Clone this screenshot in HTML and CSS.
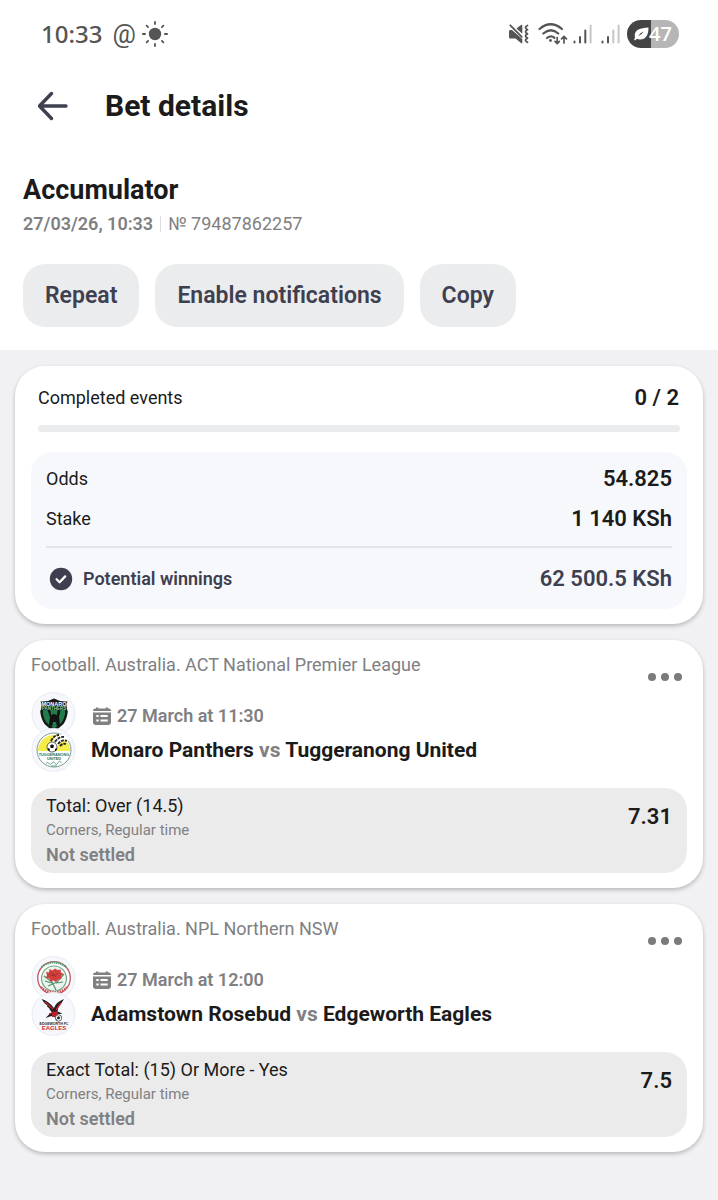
FILE: index.html
```html
<!DOCTYPE html>
<html lang="en">
<head>
<meta charset="utf-8">
<meta name="viewport" content="width=device-width, initial-scale=1">
<title>Bet details</title>
<link rel="stylesheet" href="styles.css">
</head>
<body>
<svg class="defs" width="0" height="0" aria-hidden="true">
  <symbol id="calendar" viewBox="0 0 18 18">
    <path d="M3 1.6V0.5h2.4v1.1h7.2V0.5H15v1.1h.8A2.2 2.2 0 0 1 18 3.8V4H0v-.2a2.2 2.2 0 0 1 2.2-2.2z" fill="#808082"/>
    <path fill-rule="evenodd" d="M0 5.4h18v10.2a2.4 2.4 0 0 1-2.4 2.4H2.4A2.4 2.4 0 0 1 0 15.600zM3.300 8v2h2.400V8zM7.500 8v2h7.200V8zM3.300 12.500v2h2.400v-2zM7.500 12.500v2h7.200v-2z" fill="#808082"/>
  </symbol>
  <symbol id="dots" viewBox="0 0 36 10">
    <circle cx="5" cy="5" r="4" fill="#7b7b7d"/><circle cx="18" cy="5" r="4" fill="#7b7b7d"/><circle cx="31" cy="5" r="4" fill="#7b7b7d"/>
  </symbol>
</svg>
<div class="top">
  <div class="status">
    <div class="status-left">
      <span class="clock">10:33</span>
      <span class="at">@</span>
      <svg class="sun" width="26" height="26" viewBox="0 0 26 26" aria-hidden="true">
        <circle cx="13" cy="13" r="6.200" fill="#555"/>
        <path d="M13 .9v2.200M13 22.900v2.200M.9 13h2.200M22.900 13h2.200M4.600 4.600l1.500 1.500M19.900 19.900l1.500 1.500M4.600 21.400l1.500-1.500M19.900 6.100l1.500-1.500" stroke="#555" stroke-width="1.800" stroke-linecap="round"/>
      </svg>
    </div>
    <div class="status-right">
      <svg width="22" height="22" viewBox="0 0 22 22" aria-hidden="true">
        <path d="M1 8.300q0-1.200 1.200-1.200H4l10.300 8.800v3.600q0 1.500-1.300.5L7.500 15.500H2.200Q1 15.500 1 14.300zM8.500 5.600l4.500-3.500q1.300-.9 1.300.6v8z" fill="#555"/>
        <path d="M2.300 2.300l11.500 11.500" stroke="#555" stroke-width="1.800" stroke-linecap="round"/>
        <path d="M19.500 2.500q-4 2 0 4.200-4 2 0 4.200-4 2 0 4.200-4 2 0 4.200" fill="none" stroke="#555" stroke-width="1.800" stroke-linecap="round" stroke-linejoin="round"/>
      </svg>
      <svg class="wifi" width="30" height="24" viewBox="0 0 30 24" aria-hidden="true">
        <g fill="none" stroke="#555" stroke-width="2.200" stroke-linecap="round">
          <path d="M1.500 7q11-9.500 22.500 0M5.300 11.500q7.700-6.500 15 0M9 16q4-3.200 7.500-.2"/>
          <path d="M19.200 15.500v5.700M17 19.300l2.200 2.200 2.200-2.200M26 21v-6M23.500 16.800l2.500-2.300 2.500 2.300" stroke-width="1.700"/>
        </g>
        <circle cx="12.500" cy="18.500" r="1.400" fill="#555"/>
      </svg>
      <svg width="19" height="20" viewBox="0 0 19 20" aria-hidden="true">
        <g fill="none" stroke="#555" stroke-width="2" stroke-linecap="round"><path d="M1.500 17.500v1M7 13v5.500M12.300 6.500v12"/><path d="M17.600 1.500v17" stroke="#c6c6c6"/></g>
      </svg>
      <svg class="signal-last" width="19" height="20" viewBox="0 0 19 20" aria-hidden="true">
        <g fill="none" stroke="#555" stroke-width="2" stroke-linecap="round"><path d="M1.500 17.500v1M7 13v5.500"/><path d="M12.300 6.500v12M17.600 1.500v17" stroke="#c6c6c6"/></g>
      </svg>
      <div class="battery">
        <svg width="15" height="14" viewBox="0 0 15 14" aria-hidden="true"><path d="M1 10.500C-.5 3.500 5 1 14.500.5 14.500 8 12 12.500 6 12.500q-1.800 0-3-.8L1 13.500.2 12.500zM4.200 9.200Q8 7.500 9.800 4.500 6 5.500 4.200 9.200" fill="#fff" fill-rule="evenodd"/></svg>
        <span>47</span>
      </div>
    </div>
  </div>
  <header class="bar">
    <button class="back" aria-label="Back">
      <svg width="32" height="30" viewBox="0 0 32 30" aria-hidden="true"><path d="M15.500 2.500L3.500 15l12 12.500M3.500 15H30" fill="none" stroke="#3e3f4f" stroke-width="3.400" stroke-linecap="round" stroke-linejoin="round"/></svg>
    </button>
    <h1>Bet details</h1>
  </header>
  <section class="intro">
    <h2>Accumulator</h2>
    <p class="meta"><b>27/03/26, 10:33</b><span class="number">№ 79487862257</span></p>
    <div class="actions">
      <button>Repeat</button>
      <button>Enable notifications</button>
      <button>Copy</button>
    </div>
  </section>
</div>
<main class="list">
  <section class="card">
    <div class="completed"><label for="done">Completed events</label><strong>0 / 2</strong></div>
    <progress id="done" value="0" max="2"></progress>
    <dl class="totals">
      <div class="row"><dt>Odds</dt><dd>54.825</dd></div>
      <div class="row"><dt>Stake</dt><dd>1 140 KSh</dd></div>
      <div class="row win">
        <dt><svg width="24" height="24" viewBox="0 0 24 24" aria-hidden="true"><circle cx="12" cy="12" r="11.200" fill="#3e3f4f"/><path d="M7.600 12.200l3 3 5.600-5.800" fill="none" stroke="#fff" stroke-width="2.300" stroke-linecap="round" stroke-linejoin="round"/></svg>Potential winnings</dt>
        <dd>62 500.5 KSh</dd>
      </div>
    </dl>
  </section>
  <article class="card">
    <div class="league"><span>Football. Australia. ACT National Premier League</span>
      <button class="more" aria-label="More options"><svg width="36" height="10"><use href="#dots"/></svg></button></div>
    <div class="match">
      <svg class="crests" width="46" height="80" viewBox="0 0 46 80" role="img" aria-label="Team crests">
        <circle cx="22.500" cy="22" r="21.500" fill="#f6f8fc" stroke="#e9ebf2"/>
        <path d="M9.500 9.500Q17 10 23 6.500q6 3.500 13.500 3-2 4 .3 10-.8 7.500-4.300 12.500Q29 36 23 38.500 17 36 13.500 32 10 27 9.200 19.500q2.300-6 .3-10z" fill="#151817"/>
        <path d="M12 18h22v4q-.8 5-3.500 8.500-3.500 4-7.500 6-4-2-7.500-6Q12.800 27 12 22z" fill="#237b4c"/>
        <path d="M16.500 18h2.800l.8 5 2.900-1 2.900 1 .8-5h2.800l-1.500 7 1 8-3 2-1-5h-3l-1 5-3-2 1-8z" fill="#101412"/>
        <text x="23" y="13.500" text-anchor="middle" class="crest-word" fill="#fff" font-size="5.500">MONARO</text>
        <text x="23" y="17.500" text-anchor="middle" class="crest-word" fill="#8fd0ae" font-size="4.500">PANTHERS</text>
        <circle cx="22.500" cy="58" r="21.500" fill="#f6f8fc" stroke="#e9ebf2"/>
        <circle cx="23" cy="58" r="17" fill="#fff" stroke="#7f9b91"/>
        <path d="M7 59A16 16 0 0 1 39 59z" fill="#f5ed48"/>
        <path d="M20 54q3-12 12-12 4 2 6 7-8-2-13 8z" fill="#fff"/>
        <path d="M20 49q3-6 8-6M24 50q4-6 9-5M27 52q4-5 9-3M29 54q3-3 6-2" fill="none" stroke="#222" stroke-width="1.800" stroke-dasharray="3 1"/>
        <circle cx="21" cy="55" r="5" fill="#fff" stroke="#222" stroke-width=".7"/>
        <path d="M19 53.500l2-1.300 2 1.300-.7 2.500h-2.500zM16.500 56l2 .5.500 2-1.500.5zM24 57l1.800-1v2l-1.800 1.500z" fill="#111"/>
        <text x="23" y="64" text-anchor="middle" class="crest-word" fill="#27705c" font-size="3.800">TUGGERANONG</text>
        <text x="23" y="67.500" text-anchor="middle" class="crest-word" fill="#27705c" font-size="3.800">UNITED</text>
        <path d="M15 71.500q2-2 3 0t3-.5 3 .3 3-.5 3 0M20 74h6" fill="none" stroke="#5c9b87" stroke-width=".9"/>
      </svg>
      <div class="info">
        <p class="date"><svg width="18" height="18" aria-hidden="true"><use href="#calendar"/></svg>27 March at 11:30</p>
        <h3>Monaro Panthers <span>vs</span> Tuggeranong United</h3>
      </div>
    </div>
    <div class="bet">
      <div><p class="pick">Total: Over (14.5)</p><p class="market">Corners, Regular time</p><p class="state">Not settled</p></div>
      <strong>7.31</strong>
    </div>
  </article>
  <article class="card">
    <div class="league"><span>Football. Australia. NPL Northern NSW</span>
      <button class="more" aria-label="More options"><svg width="36" height="10"><use href="#dots"/></svg></button></div>
    <div class="match">
      <svg class="crests" width="46" height="80" viewBox="0 0 46 80" role="img" aria-label="Team crests">
        <circle cx="22.500" cy="22" r="21.500" fill="#f6f8fc" stroke="#e9ebf2"/>
        <circle cx="23" cy="22" r="16.300" fill="#fff" stroke="#c25b62" stroke-width="1.300"/>
        <circle cx="23" cy="22.500" r="12.500" fill="#eaf3ec" stroke="#74a58b" stroke-width="1.200"/>
        <path d="M10.500 11q12-9 25 0" fill="none" stroke="#5f9c7b" stroke-width="2.200" stroke-dasharray="1.500 .7"/>
        <path d="M13 20l8 6 4 8M33 18l-7 8-9 4M14 25l7 2M32 26l-7 1" fill="none" stroke="#559374" stroke-width="1.200"/>
        <path d="M16 19l-1-3 3 .5.500-3.500 3 1.500 2.500-2 2.500 1.500 3-.5.500 3 2.500 1.500-2.500 2 .5 3-3.500.5-2 2.500-2.500-1.500-3 1-1-3-3.500-.5z" fill="#d23f3d"/>
        <path d="M19 18q3 4 8-1M20 16l5 5" fill="none" stroke="#8e292b" stroke-width=".8"/>
        <path d="M10 31q5 5.500 13 5.500T36 31" fill="none" stroke="#ca5059" stroke-width="2.500" stroke-dasharray="1.600 .9"/>
        <circle cx="22.500" cy="58" r="21.500" fill="#f6f8fc" stroke="#e9ebf2"/>
        <path d="M10.500 43q7 2 12.500 9 2-6 10-9-2 4-4.500 6l-1 1.500-1 5 5 2-5.500 1-1.500 3-4-1.500-6 2 4.500-4.500 2-1q-2-2-3-4.500l-2-1.500.5-.7q-3.500-2.500-6-6.800z" fill="#202024"/>
        <path d="M14 46l8 7M25 54l5-7M18 58l5-2" stroke="#c5272f" stroke-width="1.300"/>
        <path d="M21 56l6-1-1 5-5 1z" fill="#b9202a"/>
        <circle cx="27.500" cy="62" r="3.200" fill="#fff" stroke="#333" stroke-width=".7"/><path d="M26.200 61.300l1.500-.8 1.200 1-.6 1.500h-1.500zM25 63l1.500 1M29.500 59.500l1 1" fill="#222" stroke="#222" stroke-width=".6"/>
        <text x="23" y="69.300" text-anchor="middle" class="crest-word" fill="#262626" font-size="3.500">EDGEWORTH FC</text>
        <text x="23" y="74.200" text-anchor="middle" class="crest-word" fill="#d22a31" font-size="6">EAGLES</text>
      </svg>
      <div class="info">
        <p class="date"><svg width="18" height="18" aria-hidden="true"><use href="#calendar"/></svg>27 March at 12:00</p>
        <h3>Adamstown Rosebud <span>vs</span> Edgeworth Eagles</h3>
      </div>
    </div>
    <div class="bet">
      <div><p class="pick">Exact Total: (15) Or More - Yes</p><p class="market">Corners, Regular time</p><p class="state">Not settled</p></div>
      <strong>7.5</strong>
    </div>
  </article>
</main>
</body>
</html>
```
FILE: styles.css
```css
* { box-sizing: border-box; margin: 0; padding: 0; }
body {
  min-height: 100vh;
  background: #f1f1f4;
  color: #1b1b1b;
  font-family: Roboto, "Liberation Sans", sans-serif;
  font-size: 18px;
  line-height: 24px;
}
svg { display: block; flex: none; }
.defs { position: absolute; }
button { border: 0; background: none; font: inherit; color: inherit; cursor: pointer; }

.top { background: #fff; padding-bottom: 23px; }
.status {
  display: flex; justify-content: space-between; align-items: center;
  height: 68px; padding: 0 39px 0 41px; color: #555;
}
.status-left, .status-right { display: flex; align-items: center; }
.clock { font: 500 24px/28px "Noto Sans", sans-serif; margin-right: 10px; }
.at { font-size: 26px; line-height: 28px; margin-right: 6px; }
.wifi { margin: 0 5px 0 8px; }
.signal-last { margin: 0 7px 0 9px; }
.battery {
  display: flex; align-items: center; justify-content: center;
  width: 52px; height: 28px; border-radius: 14px;
  background: linear-gradient(90deg, #444 47%, #b6b6b6 47%);
  color: #fff; font: 600 20px/28px "Open Sans", sans-serif;
}

.bar { display: flex; align-items: center; gap: 37px; height: 76px; padding: 0 36px; }
.back { padding: 0; }
h1 { font-size: 30px; line-height: 36px; font-weight: 700; }

.intro { padding: 30px 23px 0; }
h2 { font-size: 27px; line-height: 32px; font-weight: 700; }
.meta { display: flex; align-items: center; margin-top: 6px; color: #808082; }
.meta b { font-weight: 600; }
.number { margin-left: 7px; padding-left: 7px; line-height: 16px; border-left: 1px solid #dedee0; }
.actions { display: flex; flex-wrap: wrap; gap: 16px; margin-top: 28px; }
.actions button {
  height: 63px; padding: 1px 22px 0; border-radius: 22px;
  background: #ebeced; color: #3e3f4f; font-size: 23px; font-weight: 600;
}

.list { display: grid; gap: 16px; padding: 16px 15px 40px; }
.card { padding: 15px 16px; border-radius: 30px; background: #fff; box-shadow: 0 2px 4px rgba(0, 0, 0, .24); }
.completed { display: flex; justify-content: space-between; align-items: center; padding: 5px 8px 0 7px; }
strong, dd { font-size: 22px; font-weight: 600; }
progress {
  display: block; width: calc(100% - 14px); height: 7px; margin: 15px 7px 20px;
  appearance: none; border: 0; border-radius: 4px; background: #ebeced; overflow: hidden;
}
progress::-webkit-progress-bar { background: #ebeced; }
progress::-webkit-progress-value { background: #3e3f4f; }
.totals { padding: 7px 15px 0; border-radius: 22px; background: #f6f8fc; }
.row { display: flex; justify-content: space-between; align-items: center; height: 40px; }
.win { height: 63px; border-top: 2px solid #e2e4e9; margin-top: 7px; color: #3e3f4f; }
.win dt { display: flex; align-items: center; gap: 10px; padding-left: 3px; font-weight: 600; }

.league { display: flex; justify-content: space-between; color: #808082; }
.league > span { margin-top: -2px; }
.more { align-self: flex-start; padding: 17px 4px 0 0; height: 27px; }
.match { display: flex; align-items: flex-start; margin-top: 10px; }
.info { padding: 12px 0 0 14px; }
.date { display: flex; align-items: center; gap: 6px; padding-left: 2px; color: #808082; font-weight: 600; }
h3 { margin-top: 8px; font-size: 21px; line-height: 28px; font-weight: 700; }
h3 span { color: #808082; }
.crest-word { font-family: "Liberation Sans", sans-serif; font-weight: 700; }
.bet {
  display: flex; justify-content: space-between; align-items: flex-start;
  margin-top: 16px; padding: 6px 15px; border-radius: 22px; background: #ebebeb;
}
.bet strong { margin-top: 11px; }
.market { font-size: 15px; color: #808082; }
.state { margin-top: 1px; color: #808082; font-weight: 600; }
```
